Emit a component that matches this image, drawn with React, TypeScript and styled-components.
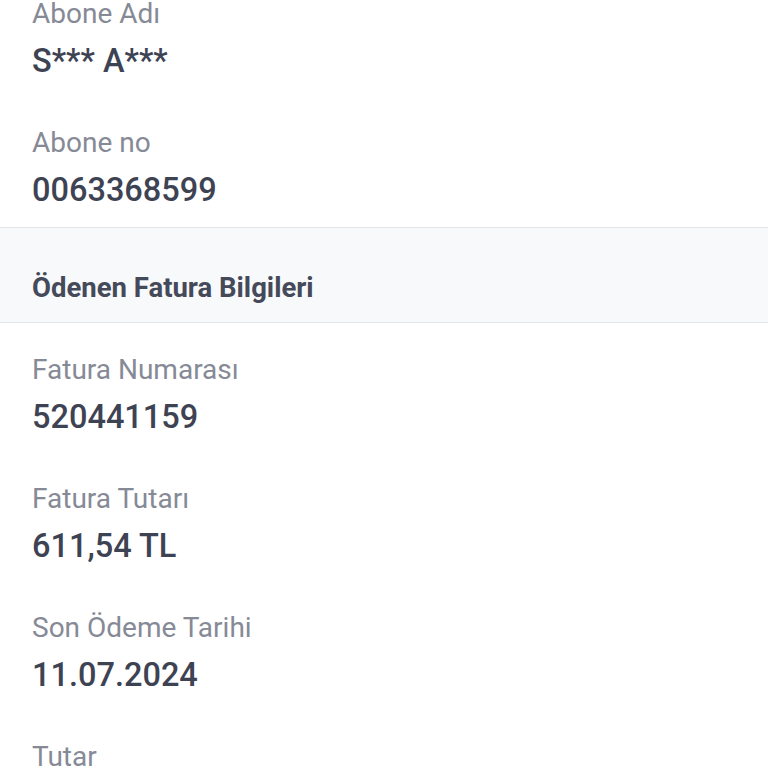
import styled, { createGlobalStyle } from "styled-components";

const GlobalStyle = createGlobalStyle`
    html, body {
        margin: 0;
        padding: 0;
        background: #ffffff;
        overflow: hidden;
    }
    body {
        font-family: Roboto, "Noto Sans", "Liberation Sans", sans-serif;
    }
`;

const Page = styled.div`
    display: flex;
    flex-direction: column;
    margin-top: -2px;
`;

const Section = styled.div<{ $top: number; $bottom: number }>`
    display: flex;
    flex-direction: column;
    gap: 46px;
    padding: ${(p) => p.$top}px 32px ${(p) => p.$bottom}px;
`;

const Field = styled.div`
    display: flex;
    flex-direction: column;
    gap: 11px;
`;

const Label = styled.div`
    font-size: 28px;
    line-height: 32px;
    font-weight: 400;
    color: #868a96;
`;

const Value = styled.div`
    font-size: 32.5px;
    line-height: 40px;
    font-weight: 500;
    color: #3e4353;
`;

const SectionHeader = styled.div`
    background: #f8f9fb;
    border-top: 1px solid #e3e5e9;
    border-bottom: 1px solid #e3e5e9;
    padding: 44px 32px 18px;
    font-size: 27.5px;
    line-height: 32px;
    font-weight: 700;
    color: #454a5a;
`;

type Item = { label: string; value?: string };

const subscriber: Item[] = [
    { label: "Abone Adı", value: "S*** A***" },
    { label: "Abone no", value: "0063368599" },
];

const invoice: Item[] = [
    { label: "Fatura Numarası", value: "520441159" },
    { label: "Fatura Tutarı", value: "611,54 TL" },
    { label: "Son Ödeme Tarihi", value: "11.07.2024" },
    { label: "Tutar" },
];

function Fields({ items }: { items: Item[] }) {
    return (
        <>
            {items.map((it) => (
                <Field key={it.label}>
                    <Label>{it.label}</Label>
                    {it.value && <Value>{it.value}</Value>}
                </Field>
            ))}
        </>
    );
}

export default function App() {
    return (
        <>
            <GlobalStyle />
            <Page>
                <Section $top={0} $bottom={17}>
                    <Fields items={subscriber} />
                </Section>
                <SectionHeader>Ödenen Fatura Bilgileri</SectionHeader>
                <Section $top={31} $bottom={40}>
                    <Fields items={invoice} />
                </Section>
            </Page>
        </>
    );
}
